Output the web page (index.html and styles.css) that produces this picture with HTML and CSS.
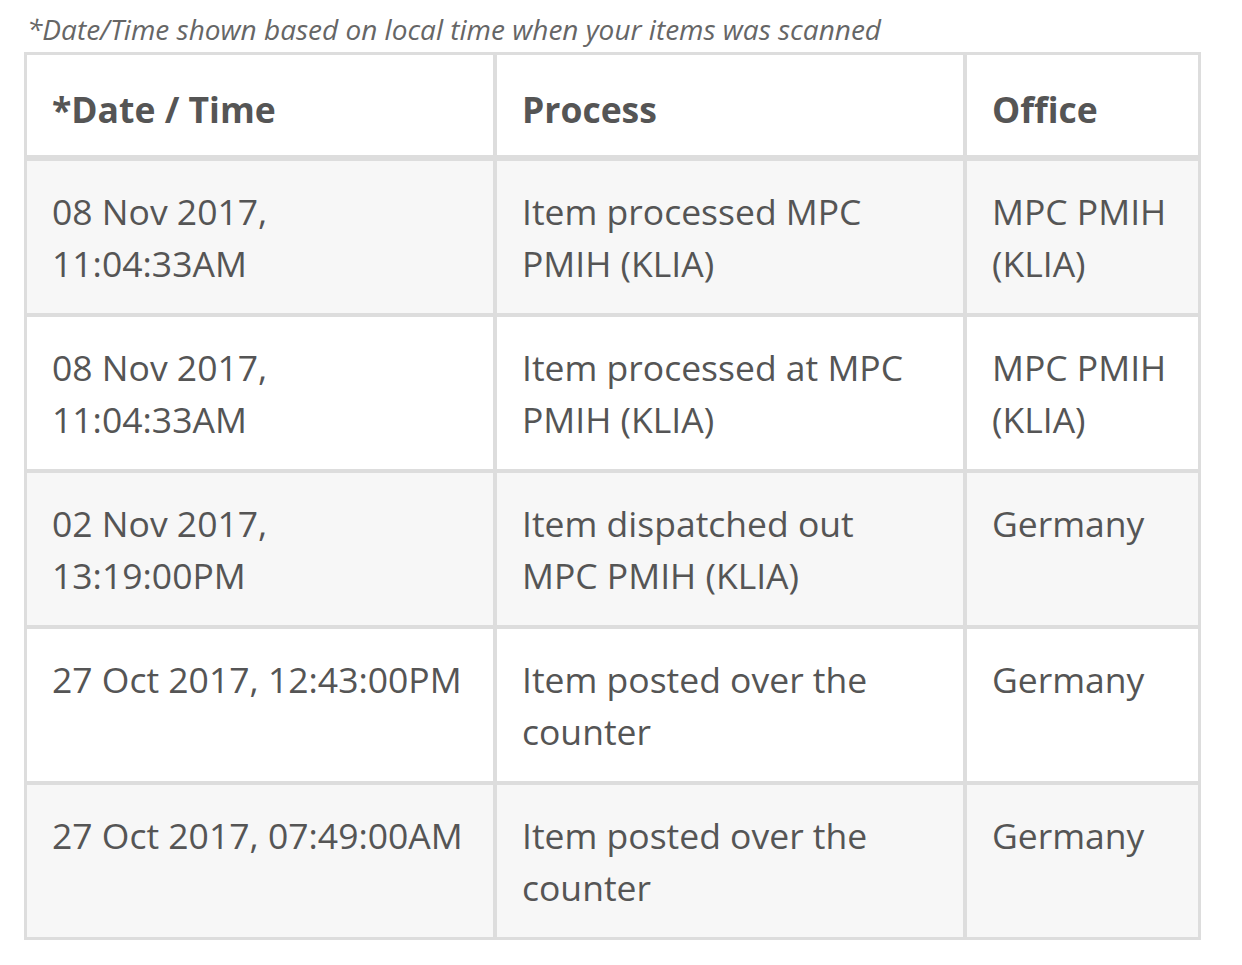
FILE: index.html
```html
<!DOCTYPE html>
<html>
<head>
<meta charset="utf-8">
<link rel="stylesheet" href="styles.css">
</head>
<body>
<p class="note">*Date/Time shown based on local time when your items was scanned</p>
<table class="track">
  <thead>
    <tr>
      <th class="c1">*Date / Time</th>
      <th class="c2">Process</th>
      <th class="c3">Office</th>
    </tr>
  </thead>
  <tbody>
    <tr class="odd">
      <td>08 Nov 2017,<br>11:04:33AM</td>
      <td>Item processed MPC PMIH (KLIA)</td>
      <td>MPC PMIH (KLIA)</td>
    </tr>
    <tr>
      <td>08 Nov 2017,<br>11:04:33AM</td>
      <td>Item processed at MPC PMIH (KLIA)</td>
      <td>MPC PMIH (KLIA)</td>
    </tr>
    <tr class="odd">
      <td>02 Nov 2017,<br>13:19:00PM</td>
      <td>Item dispatched out MPC PMIH (KLIA)</td>
      <td>Germany</td>
    </tr>
    <tr>
      <td>27 Oct 2017, 12:43:00PM</td>
      <td>Item posted over the counter</td>
      <td>Germany</td>
    </tr>
    <tr class="odd">
      <td>27 Oct 2017, 07:49:00AM</td>
      <td>Item posted over the counter</td>
      <td>Germany</td>
    </tr>
  </tbody>
</table>
</body>
</html>
```

FILE: styles.css
```css
html, body {
  margin: 0;
  padding: 0;
  background: #ffffff;
}

body {
  font-family: "Open Sans", "Noto Sans", sans-serif;
  color: #555555;
}

.note {
  margin: 0;
  padding: 9px 0 0 27px;
  height: 52px;
  box-sizing: border-box;
  font-size: 28px;
  line-height: 40px;
  font-style: italic;
  color: #666666;
}

.track {
  margin: 0 0 0 24px;
  width: 1177px;
  table-layout: fixed;
  border-collapse: separate;
  border-spacing: 0;
  border: 3px solid #dddddd;
  box-sizing: border-box;
}

.track th,
.track td {
  box-sizing: border-box;
  padding: 24px 24px 24px 25px;
  font-size: 35.5px;
  line-height: 52px;
  text-align: left;
  vertical-align: top;
  border-right: 4px solid #dddddd;
  border-bottom: 4px solid #dddddd;
}

.track td:nth-child(2) {
  padding-right: 40px;
}

.track th {
  padding-top: 28px;
  padding-bottom: 20px;
  font-weight: 700;
  background: #ffffff;
  border-bottom-width: 6px;
}

.track .c1 { width: 470px; }
.track .c2 { width: 470px; }
.track .c3 { width: 231px; }

.track th:last-child,
.track td:last-child {
  border-right: 0;
}

.track tbody tr:last-child td {
  border-bottom: 0;
}

.track tbody tr {
  background: #ffffff;
}

.track tbody tr.odd {
  background: #f7f7f7;
}
```
